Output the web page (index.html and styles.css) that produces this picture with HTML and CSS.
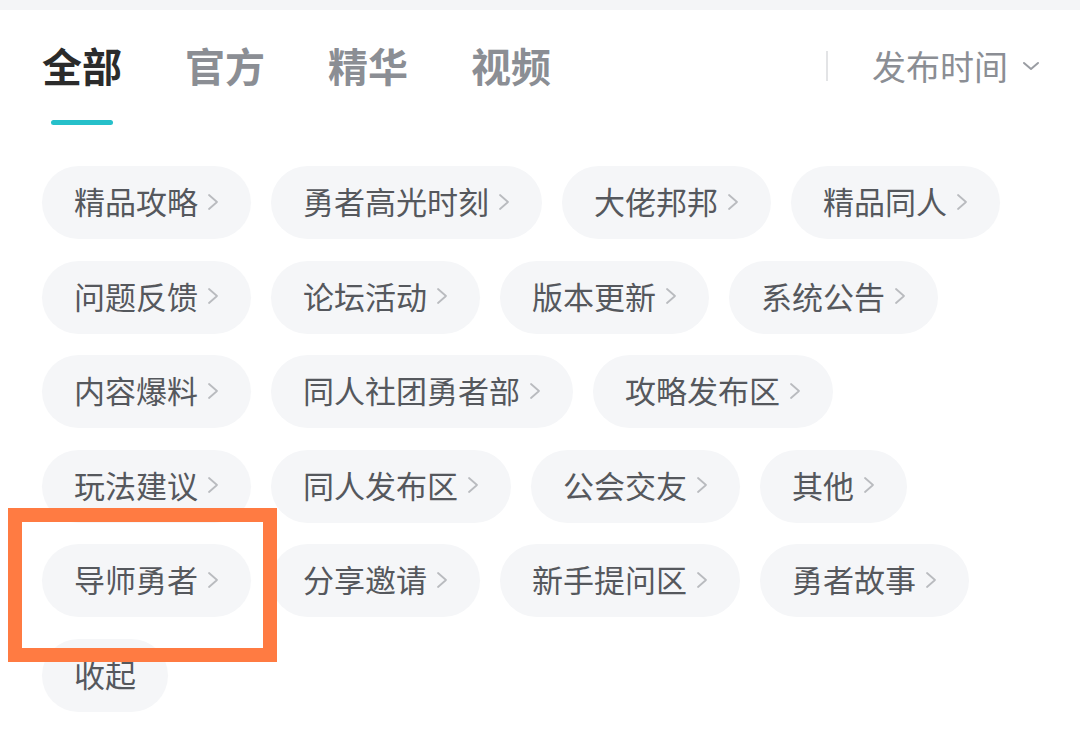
FILE: index.html
```html
<!DOCTYPE html>
<html lang="zh-CN">
<head>
<meta charset="utf-8">
<link rel="stylesheet" href="styles.css">
</head>
<body>
<div class="topbar"></div>
<div class="tabs-row">
  <div class="tab active"><span class="tab-label">全部</span><span class="tab-line"></span></div>
  <div class="tab"><span class="tab-label">官方</span><span class="tab-line"></span></div>
  <div class="tab"><span class="tab-label">精华</span><span class="tab-line"></span></div>
  <div class="tab"><span class="tab-label">视频</span><span class="tab-line"></span></div>
  <div class="sort">
    <span class="sort-sep"></span>
    <span class="sort-label">发布时间</span>
    <svg class="sort-chev" width="18" height="10" viewBox="0 0 18 10"><path d="M2 2 L9 8 L16 2" fill="none" stroke="#9a9da3" stroke-width="2" stroke-linecap="round" stroke-linejoin="round"/></svg>
  </div>
</div>
<div class="chips">
  <div class="chip">精品攻略<svg class="chev" width="12" height="20" viewBox="0 0 12 20"><path d="M2 3 L10 10 L2 17" fill="none" stroke="#b9bbbf" stroke-width="1.8" stroke-linecap="round" stroke-linejoin="round"/></svg></div>
  <div class="chip">勇者高光时刻<svg class="chev" width="12" height="20" viewBox="0 0 12 20"><path d="M2 3 L10 10 L2 17" fill="none" stroke="#b9bbbf" stroke-width="1.8" stroke-linecap="round" stroke-linejoin="round"/></svg></div>
  <div class="chip">大佬邦邦<svg class="chev" width="12" height="20" viewBox="0 0 12 20"><path d="M2 3 L10 10 L2 17" fill="none" stroke="#b9bbbf" stroke-width="1.8" stroke-linecap="round" stroke-linejoin="round"/></svg></div>
  <div class="chip">精品同人<svg class="chev" width="12" height="20" viewBox="0 0 12 20"><path d="M2 3 L10 10 L2 17" fill="none" stroke="#b9bbbf" stroke-width="1.8" stroke-linecap="round" stroke-linejoin="round"/></svg></div>
  <div class="chip">问题反馈<svg class="chev" width="12" height="20" viewBox="0 0 12 20"><path d="M2 3 L10 10 L2 17" fill="none" stroke="#b9bbbf" stroke-width="1.8" stroke-linecap="round" stroke-linejoin="round"/></svg></div>
  <div class="chip">论坛活动<svg class="chev" width="12" height="20" viewBox="0 0 12 20"><path d="M2 3 L10 10 L2 17" fill="none" stroke="#b9bbbf" stroke-width="1.8" stroke-linecap="round" stroke-linejoin="round"/></svg></div>
  <div class="chip">版本更新<svg class="chev" width="12" height="20" viewBox="0 0 12 20"><path d="M2 3 L10 10 L2 17" fill="none" stroke="#b9bbbf" stroke-width="1.8" stroke-linecap="round" stroke-linejoin="round"/></svg></div>
  <div class="chip">系统公告<svg class="chev" width="12" height="20" viewBox="0 0 12 20"><path d="M2 3 L10 10 L2 17" fill="none" stroke="#b9bbbf" stroke-width="1.8" stroke-linecap="round" stroke-linejoin="round"/></svg></div>
  <div class="chip">内容爆料<svg class="chev" width="12" height="20" viewBox="0 0 12 20"><path d="M2 3 L10 10 L2 17" fill="none" stroke="#b9bbbf" stroke-width="1.8" stroke-linecap="round" stroke-linejoin="round"/></svg></div>
  <div class="chip">同人社团勇者部<svg class="chev" width="12" height="20" viewBox="0 0 12 20"><path d="M2 3 L10 10 L2 17" fill="none" stroke="#b9bbbf" stroke-width="1.8" stroke-linecap="round" stroke-linejoin="round"/></svg></div>
  <div class="chip">攻略发布区<svg class="chev" width="12" height="20" viewBox="0 0 12 20"><path d="M2 3 L10 10 L2 17" fill="none" stroke="#b9bbbf" stroke-width="1.8" stroke-linecap="round" stroke-linejoin="round"/></svg></div>
  <div class="chip">玩法建议<svg class="chev" width="12" height="20" viewBox="0 0 12 20"><path d="M2 3 L10 10 L2 17" fill="none" stroke="#b9bbbf" stroke-width="1.8" stroke-linecap="round" stroke-linejoin="round"/></svg></div>
  <div class="chip">同人发布区<svg class="chev" width="12" height="20" viewBox="0 0 12 20"><path d="M2 3 L10 10 L2 17" fill="none" stroke="#b9bbbf" stroke-width="1.8" stroke-linecap="round" stroke-linejoin="round"/></svg></div>
  <div class="chip">公会交友<svg class="chev" width="12" height="20" viewBox="0 0 12 20"><path d="M2 3 L10 10 L2 17" fill="none" stroke="#b9bbbf" stroke-width="1.8" stroke-linecap="round" stroke-linejoin="round"/></svg></div>
  <div class="chip">其他<svg class="chev" width="12" height="20" viewBox="0 0 12 20"><path d="M2 3 L10 10 L2 17" fill="none" stroke="#b9bbbf" stroke-width="1.8" stroke-linecap="round" stroke-linejoin="round"/></svg></div>
  <div class="chip">导师勇者<svg class="chev" width="12" height="20" viewBox="0 0 12 20"><path d="M2 3 L10 10 L2 17" fill="none" stroke="#b9bbbf" stroke-width="1.8" stroke-linecap="round" stroke-linejoin="round"/></svg></div>
  <div class="chip">分享邀请<svg class="chev" width="12" height="20" viewBox="0 0 12 20"><path d="M2 3 L10 10 L2 17" fill="none" stroke="#b9bbbf" stroke-width="1.8" stroke-linecap="round" stroke-linejoin="round"/></svg></div>
  <div class="chip">新手提问区<svg class="chev" width="12" height="20" viewBox="0 0 12 20"><path d="M2 3 L10 10 L2 17" fill="none" stroke="#b9bbbf" stroke-width="1.8" stroke-linecap="round" stroke-linejoin="round"/></svg></div>
  <div class="chip">勇者故事<svg class="chev" width="12" height="20" viewBox="0 0 12 20"><path d="M2 3 L10 10 L2 17" fill="none" stroke="#b9bbbf" stroke-width="1.8" stroke-linecap="round" stroke-linejoin="round"/></svg></div>
  <div class="chip">收起</div>
</div>
<div class="highlight"></div>
</body>
</html>
```

FILE: styles.css
```css
html, body {
  margin: 0;
  padding: 0;
  background: #ffffff;
  font-family: "Noto Sans CJK SC", "Noto Sans", sans-serif;
}
body {
  position: relative;
  width: 1080px;
  height: 744px;
  overflow: hidden;
}
.topbar {
  height: 10px;
  background: #f4f5f7;
}
.tabs-row {
  display: flex;
  align-items: flex-start;
  padding: 26px 40px 0 42px;
}
.tab {
  display: flex;
  flex-direction: column;
  align-items: center;
  margin-right: 63px;
}
.tab-label {
  font-size: 40px;
  line-height: 58px;
  font-weight: 700;
  color: #8b8e94;
}
.tab.active .tab-label {
  color: #2b2b2b;
}
.tab-line {
  width: 62px;
  height: 5px;
  border-radius: 3px;
  margin-top: 26px;
  background: transparent;
}
.tab.active .tab-line {
  background: #26c0ca;
}
.sort {
  margin-left: auto;
  display: flex;
  align-items: center;
  height: 60px;
}
.sort-sep {
  width: 2px;
  height: 30px;
  background: #e3e4e6;
  margin-right: 44px;
}
.sort-label {
  font-size: 34px;
  line-height: 58px;
  color: #8b8e94;
}
.sort-chev {
  margin-left: 14px;
}
.chips {
  display: flex;
  flex-wrap: wrap;
  gap: 21.5px 20px;
  padding: 41px 42px 0 42px;
}
.chip {
  display: flex;
  align-items: center;
  box-sizing: border-box;
  height: 73px;
  padding: 0 32px 4px 32px;
  border-radius: 37px;
  background: #f5f6f8;
  color: #55585d;
  font-size: 31px;
  line-height: 69px;
}
.chev {
  margin-left: 9px;
  margin-top: 2px;
}
.highlight {
  position: absolute;
  left: 8px;
  top: 508px;
  width: 269px;
  height: 154px;
  box-sizing: border-box;
  border: 14px solid #ff7b42;
}
```
